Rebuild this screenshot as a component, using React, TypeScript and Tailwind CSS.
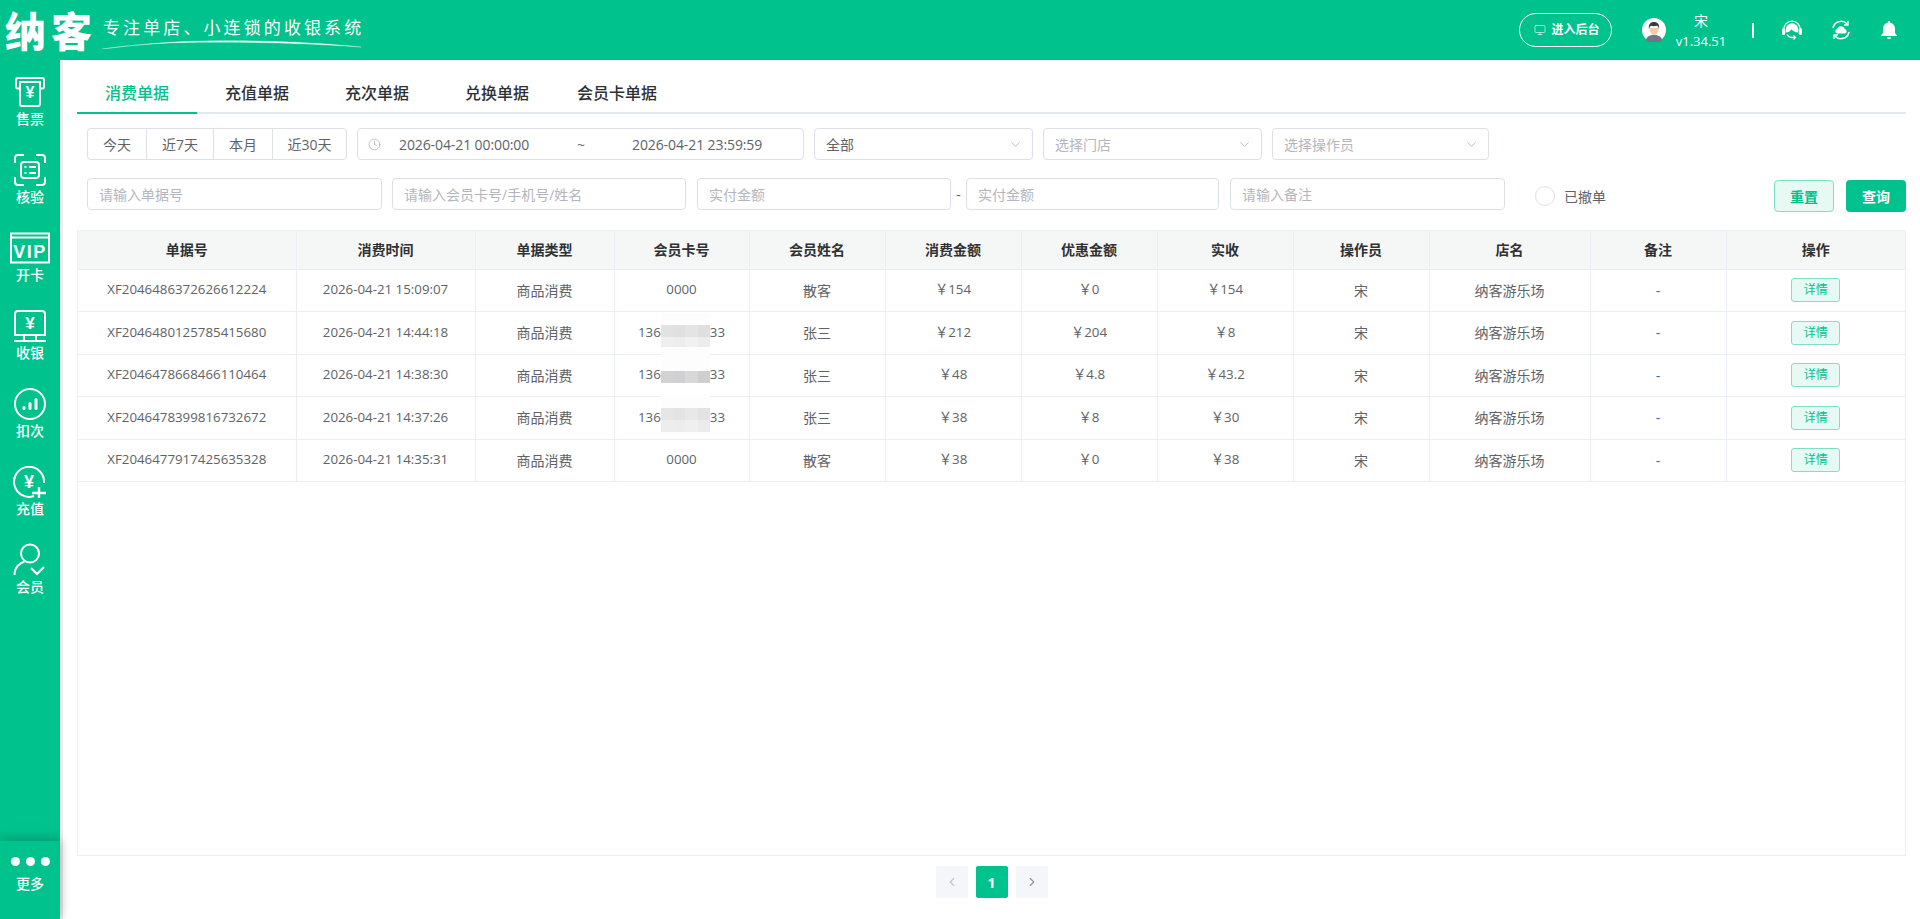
import React from "react";
import { ChevronDown, ChevronLeft, ChevronRight, Clock, Monitor } from "lucide-react";

const FONT = "font-['Open_Sans','Noto_Sans_CJK_SC',sans-serif]";
const CJK = "font-['Noto_Sans_CJK_SC','Noto_Sans',sans-serif]";

type Row = {
    no: string;
    time: string;
    card: string;
    name: string;
    total: string;
    off: string;
    paid: string;
    blur?: 1 | 2 | 3;
    h: string;
};

const rows: Row[] = [
    { no: "XF2046486372626612224", time: "2026-04-21 15:09:07", card: "0000", name: "散客", total: "154", off: "0", paid: "154", h: "h-[42px]" },
    { no: "XF2046480125785415680", time: "2026-04-21 14:44:18", card: "", name: "张三", total: "212", off: "204", paid: "8", blur: 1, h: "h-[43px]" },
    { no: "XF2046478668466110464", time: "2026-04-21 14:38:30", card: "", name: "张三", total: "48", off: "4.8", paid: "43.2", blur: 2, h: "h-[42px]" },
    { no: "XF2046478399816732672", time: "2026-04-21 14:37:26", card: "", name: "张三", total: "38", off: "8", paid: "30", blur: 3, h: "h-[43px]" },
    { no: "XF2046477917425635328", time: "2026-04-21 14:35:31", card: "0000", name: "散客", total: "38", off: "0", paid: "38", h: "h-[42px]" },
];

const columns = ["单据号", "消费时间", "单据类型", "会员卡号", "会员姓名", "消费金额", "优惠金额", "实收", "操作员", "店名", "备注", "操作"];
const colWidths = ["w-[218px]", "w-[179px]", "w-[139px]", "w-[135px]", "w-[136px]", "w-[136px]", "w-[136px]", "w-[136px]", "w-[136px]", "w-[161px]", "w-[136px]", "w-auto"];

const Ticket = () => (
    <svg width="32" height="32" viewBox="0 0 32 32" fill="none" stroke="white" strokeWidth="2">
        <path d="M6 12.5H3.5A1.5 1.5 0 0 1 2 11V4a2 2 0 0 1 2-2h24a2 2 0 0 1 2 2v7a1.5 1.5 0 0 1-1.5 1.5H26" />
        <path d="M6 6h20v22a2 2 0 0 1-2 2H8a2 2 0 0 1-2-2z" />
        <text x="16" y="22" textAnchor="middle" fontSize="16" fontWeight="700" fill="white" stroke="none" fontFamily="Liberation Sans">¥</text>
    </svg>
);

const Scan = () => (
    <svg width="32" height="32" viewBox="0 0 32 32" fill="none" stroke="white" strokeWidth="2">
        <path d="M1 9V4a3 3 0 0 1 3-3h6M22 1h6a3 3 0 0 1 3 3v5M31 23v5a3 3 0 0 1-3 3h-6M10 31H4a3 3 0 0 1-3-3v-5" />
        <rect x="7" y="8" width="18" height="16" rx="3" />
        <path d="M10.5 13h2M15 13h7M10.5 19h2M15 19h7" />
    </svg>
);

const Vip = () => (
    <svg width="42" height="32" viewBox="0 0 42 32" fill="none" stroke="white" strokeWidth="2">
        <rect x="2" y="1.5" width="38" height="29" />
        <path d="M2 5.5h38" />
        <text x="21" y="26" textAnchor="middle" fontSize="18" fontWeight="700" letterSpacing="1.5" fill="white" stroke="none" fontFamily="Liberation Sans">VIP</text>
    </svg>
);

const Cashier = () => (
    <svg width="34" height="32" viewBox="0 0 34 32" fill="none" stroke="white" strokeWidth="2">
        <path d="M2 25V4a3 3 0 0 1 3-3h24a3 3 0 0 1 3 3v21" />
        <path d="M1 31h32M1 25h32M11 25v6M23 25v6" />
        <text x="17" y="19" textAnchor="middle" fontSize="17" fontWeight="700" fill="white" stroke="none" fontFamily="Liberation Sans">¥</text>
    </svg>
);

const Deduct = () => (
    <svg width="32" height="32" viewBox="0 0 32 32" fill="none" stroke="white" strokeWidth="2">
        <circle cx="16" cy="16" r="15" />
        <rect x="8.5" y="18" width="3" height="4" rx="1.5" fill="white" stroke="none" />
        <rect x="14.5" y="14" width="3" height="8" rx="1.5" fill="white" stroke="none" />
        <rect x="20.5" y="10" width="3" height="12" rx="1.5" fill="white" stroke="none" />
    </svg>
);

const Recharge = () => (
    <svg width="34" height="32" viewBox="0 0 34 32" fill="none" stroke="white" strokeWidth="2">
        <path d="M21 30a15 15 0 1 1 10-13" />
        <path d="M19 27h14M26 21v11" strokeWidth="2.4" />
        <text x="16" y="22" textAnchor="middle" fontSize="18" fontWeight="700" fill="white" stroke="none" fontFamily="Liberation Sans">¥</text>
    </svg>
);

const Member = () => (
    <svg width="34" height="34" viewBox="0 0 34 34" fill="none" stroke="white" strokeWidth="2">
        <circle cx="17" cy="10.5" r="9" />
        <path d="M1.5 32c0-7 4.5-12 10-13.5" />
        <path d="M18 25l6 6 7-7" strokeWidth="2.2" />
    </svg>
);

const navItems = [
    { label: "售票", icon: <Ticket /> },
    { label: "核验", icon: <Scan /> },
    { label: "开卡", icon: <Vip /> },
    { label: "收银", icon: <Cashier /> },
    { label: "扣次", icon: <Deduct /> },
    { label: "充值", icon: <Recharge /> },
    { label: "会员", icon: <Member /> },
];

const Avatar = () => (
    <svg width="24" height="24" viewBox="0 0 24 24">
        <circle cx="12" cy="12" r="12" fill="white" />
        <path d="M4 22c.6-3.6 3.5-5 8-5s7.400 1.400 8 5a12 12 0 0 1-16 0z" fill="#6f7783" />
        <path d="M7.500 10c0 4 2 7 4.500 7s4.500-3 4.500-7z" fill="#f5c9a8" />
        <path d="M7 11c-.8-4.500 1.500-7 5-7s5.800 2.500 5 7c-.5-2-1.200-3-2-3.300-2 .6-4.500.6-6 0-.8.500-1.500 1.500-2 3.300z" fill="#3a3a3d" />
    </svg>
);

const Headset = () => (
    <svg width="20" height="20" viewBox="0 0 20 20" fill="none">
        <path d="M1.700 9.500a8.300 8.300 0 0 1 16.600 0" stroke="white" strokeWidth="1.300" />
        <rect x="0" y="8" width="3.200" height="7" rx="1.500" fill="white" />
        <rect x="16.800" y="8" width="3.200" height="7" rx="1.500" fill="white" />
        <path d="M3.800 9.500a6.200 6.200 0 0 1 12.400 0v3c-3.200-.2-5.200-1.200-6.700-3.200-1 2-3 3.200-5.700 3.200z" fill="white" />
        <path d="M5 14.500c1 2 2.700 3 5 3h3.500" stroke="white" strokeWidth="1.300" />
        <path d="M11.500 15.500l2.200 2-2.200 2" stroke="white" strokeWidth="1.100" />
    </svg>
);

const CloudSync = () => (
    <svg width="20" height="20" viewBox="0 0 20 20" fill="none" stroke="white" strokeWidth="1.600">
        <path d="M2 8a8.300 8.300 0 0 1 14-4.300" />
        <path d="M18 12a8.300 8.300 0 0 1-14 4.300" />
        <path d="M17 1v4h-4M3 19v-4h4" strokeWidth="1.300" />
        <path d="M6 13.500a2.300 2.300 0 0 1 .2-4.500 3.900 3.900 0 0 1 7.500 0 2.300 2.300 0 0 1 .2 4.500z" fill="white" stroke="none" />
    </svg>
);

const Bell = () => (
    <svg width="18" height="20" viewBox="0 0 18 20" fill="white">
        <path d="M9 1a1.300 1.300 0 0 1 1.300 1.300v.5C13.500 3.500 15 6 15 9v4l2 2.500v.5H1v-.5L3 13V9c0-3 1.500-5.500 4.700-6.200v-.5A1.300 1.300 0 0 1 9 1z" />
        <path d="M7 17.300h4a2 2 0 0 1-4 0z" />
    </svg>
);

const mosaics: Record<number, { top: string; cells: string[][] }> = {
    1: {
        top: "-top-[10px]",
        cells: [
            ["bg-[#fdfdfd]", "bg-[#fdfdfd]", "bg-[#fdfdfd]", "bg-[#fdfdfd]"],
            ["bg-[#e2e2e2]", "bg-[#e0e0e0]", "bg-[#e4e4e4]", "bg-[#dfdfdf]"],
            ["bg-[#efefef]", "bg-[#ededed]", "bg-[#f1f1f1]", "bg-[#ececec]"],
        ],
    },
    2: {
        top: "-top-[18px]",
        cells: [
            ["bg-[#fdfdfd]", "bg-[#fdfdfd]", "bg-[#fdfdfd]", "bg-[#fdfdfd]"],
            ["bg-[#fdfdfd]", "bg-[#fdfdfd]", "bg-[#fdfdfd]", "bg-[#fdfdfd]"],
            ["bg-[#d2d2d2]", "bg-[#d0d0d2]", "bg-[#d8d8d8]", "bg-[#cfcfcf]"],
        ],
    },
    3: {
        top: "-top-[12px]",
        cells: [
            ["bg-[#fdfdfd]", "bg-[#fdfdfd]", "bg-[#fdfdfd]", "bg-[#fdfdfd]"],
            ["bg-[#e6e6e6]", "bg-[#e4e4e4]", "bg-[#e8e8e8]", "bg-[#e3e3e3]"],
            ["bg-[#ededed]", "bg-[#ececec]", "bg-[#efefef]", "bg-[#ebebeb]"],
        ],
    },
};

const Blurred = ({ kind }: { kind: number }) => {
    const m = mosaics[kind];
    return (
        <span className="flex items-center justify-center">
            <span>136</span>
            <span className="relative block w-[49px] h-[20px]">
                <span className={`absolute left-0 w-[49px] grid grid-cols-4 ${m.top}`}>
                    {m.cells.flat().map((c, i) => (
                        <span key={i} className={`block h-[12px] ${c}`} />
                    ))}
                </span>
            </span>
            <span>33</span>
        </span>
    );
};

const Field = ({ text, className, dark }: { text: string; className: string; dark?: boolean }) => (
    <div
        className={`h-[32px] border border-[#dcdfe6] rounded-[4px] pl-[11px] flex items-center text-[14px] bg-white ${dark ? "text-[#606266]" : "text-[#b4b6bd]"} ${className}`}
    >
        {text}
    </div>
);

const SelectBox = ({ text, className, dark }: { text: string; className: string; dark?: boolean }) => (
    <div
        className={`h-[32px] border border-[#dcdfe6] rounded-[4px] pl-[11px] pr-[9px] flex items-center justify-between text-[14px] bg-white ${dark ? "text-[#606266]" : "text-[#b4b6bd]"} ${className}`}
    >
        <span>{text}</span>
        <ChevronDown size={15} strokeWidth={1} className="text-[#909399]" />
    </div>
);

export default function App() {
    return (
        <div className={`h-screen w-full flex flex-col overflow-hidden bg-white ${FONT}`}>
            {/* header */}
            <header className="h-[60px] shrink-0 bg-[#00c28c] flex items-center text-white">
                <div className={`w-[96px] ml-[5px] -mt-[2px] text-[41px] leading-[58px] font-black tracking-[5px] whitespace-nowrap ${CJK}`}>纳客</div>
                <div className="relative ml-[1px] w-[262px] h-[60px]">
                    <div className="pt-[15px] pl-[1px] text-[17px] leading-[24px] tracking-[3.1px] whitespace-nowrap font-['Noto_Sans_CJK_SC',serif]">
                        专注单店、小连锁的收银系统
                    </div>
                    <svg className="absolute left-0 top-[39px]" width="262" height="10" viewBox="0 0 262 10" fill="none">
                        <path d="M0 10C40 5 70 2.500 100 2c60-1 110 1 159 6C200 4 150 3 100 3.200 60 3.400 30 6 0 10z" fill="white" stroke="white" strokeWidth=".3" />
                    </svg>
                </div>
                <div className="ml-auto flex items-center">
                    <div className="w-[93px] h-[34px] pl-[3px] rounded-full border border-white flex items-center justify-center gap-[5px] text-[12px] font-bold">
                        <Monitor size={12} strokeWidth={1.2} />
                        <span>进入后台</span>
                    </div>
                    <div className="ml-[30px]">
                        <Avatar />
                    </div>
                    <div className="ml-[10px] w-[50px] flex flex-col items-center text-[14px] leading-[20px] mt-[1px]">
                        <span>宋</span>
                        <span className="text-[13px]">v1.34.51</span>
                    </div>
                    <div className="ml-[26px] w-[2px] h-[15px] bg-white" />
                    <div className="ml-[28px] flex items-center gap-[29px] mr-[22px]">
                        <Headset />
                        <CloudSync />
                        <Bell />
                    </div>
                </div>
            </header>

            <div className="flex-1 flex min-h-0">
                {/* sidebar */}
                <aside className="w-[63px] shrink-0 bg-[#00c28c] border-r-[3px] border-[#ececec] flex flex-col justify-between text-white text-[14px]">
                    <nav className="pt-[4px]">
                        {navItems.map((item) => (
                            <div key={item.label} className="h-[78px] pt-[12px] flex flex-col items-center">
                                <div className="h-[32px] flex items-center justify-center">{item.icon}</div>
                                <span className="mt-[1px] leading-[20px] font-medium">{item.label}</span>
                            </div>
                        ))}
                    </nav>
                    <div className="relative h-[78px] w-[60px] shrink-0 bg-[#00c28c] shadow-[0_-4px_10px_rgba(0,0,0,0.12),3px_0_8px_rgba(0,0,0,0.12)] flex flex-col items-center pt-[16px]">
                        <div className="flex gap-[6px]">
                            <span className="w-[9px] h-[9px] rounded-full bg-white" />
                            <span className="w-[9px] h-[9px] rounded-full bg-white" />
                            <span className="w-[9px] h-[9px] rounded-full bg-white" />
                        </div>
                        <span className="mt-[8px] leading-[20px] font-medium">更多</span>
                    </div>
                </aside>

                <main className="flex-1 min-w-0 pl-[14px] pr-[14px] flex flex-col">
                    {/* tabs */}
                    <div className="h-[54px] shrink-0 flex items-end border-b-2 border-[#e4e7ed]">
                        {["消费单据", "充值单据", "充次单据", "兑换单据", "会员卡单据"].map((tab, i) => (
                            <div
                                key={tab}
                                className={`w-[120px] h-[40px] -mb-[2px] flex items-center justify-center text-[16px] font-medium border-b-2 ${i === 0 ? "text-[#00c28c] border-[#00c28c]" : "text-[#303133] border-transparent"}`}
                            >
                                {tab}
                            </div>
                        ))}
                    </div>

                    {/* filters */}
                    <div className="mt-[14px] pl-[10px] flex gap-[10px]">
                        <div className="flex h-[32px] border border-[#dcdfe6] rounded-[4px] text-[14px] text-[#606266]">
                            <div className="w-[59px] flex items-center justify-center border-r border-[#dcdfe6]">今天</div>
                            <div className="w-[67px] flex items-center justify-center border-r border-[#dcdfe6]">近7天</div>
                            <div className="w-[59px] flex items-center justify-center border-r border-[#dcdfe6]">本月</div>
                            <div className="w-[73px] flex items-center justify-center">近30天</div>
                        </div>
                        <div className="w-[447px] h-[32px] border border-[#dcdfe6] rounded-[4px] flex items-center text-[#606266] text-[14px]">
                            <Clock size={13} strokeWidth={1} className="ml-[10px] text-[#909399]" />
                            <span className="ml-[18px] w-[131px] tracking-[-0.1px] whitespace-nowrap">2026-04-21 00:00:00</span>
                            <span className="ml-[47px] w-[55px]">~</span>
                            <span className="w-[131px] tracking-[-0.1px] whitespace-nowrap">2026-04-21 23:59:59</span>
                        </div>
                        <SelectBox text="全部" dark className="w-[219px]" />
                        <SelectBox text="选择门店" className="w-[219px]" />
                        <SelectBox text="选择操作员" className="w-[217px]" />
                    </div>

                    <div className="mt-[18px] pl-[10px] flex items-start h-[34px]">
                        <Field text="请输入单据号" className="w-[295px]" />
                        <Field text="请输入会员卡号/手机号/姓名" className="w-[294px] ml-[10px]" />
                        <Field text="实付金额" className="w-[254px] ml-[11px]" />
                        <span className="w-[15px] h-[32px] flex items-center justify-center text-[14px] text-[#606266]">-</span>
                        <Field text="实付金额" className="w-[253px]" />
                        <Field text="请输入备注" className="w-[275px] ml-[11px]" />
                        <div className="ml-[30px] h-[32px] flex items-center text-[14px] text-[#606266] mt-[2px]">
                            <span className="w-[20px] h-[20px] rounded-full border border-[#dcdfe6]" />
                            <span className="ml-[9px]">已撤单</span>
                        </div>
                        <div className="ml-auto flex gap-[12px] mt-[2px]">
                            <button className="w-[60px] h-[32px] rounded-[4px] border border-[#80e0c5] bg-[#e6f9f3] text-[#00c28c] text-[14px] font-bold">重置</button>
                            <button className="w-[60px] h-[32px] rounded-[4px] bg-[#00c28c] text-white text-[14px] font-bold">查询</button>
                        </div>
                    </div>

                    {/* table */}
                    <div className="mt-[18px] flex-1 min-h-0 border border-[#ebeef5] overflow-hidden">
                        <table className="w-full table-fixed border-collapse text-[14px] text-[#606266]">
                            <colgroup>
                                {colWidths.map((w, i) => (
                                    <col key={i} className={w} />
                                ))}
                            </colgroup>
                            <thead>
                                <tr className="h-[38px] bg-[#f5f7f7]">
                                    {columns.map((c) => (
                                        <th key={c} className="border-r border-b border-[#ebeef5] last:border-r-0 font-bold text-[#303133] text-center">
                                            {c}
                                        </th>
                                    ))}
                                </tr>
                            </thead>
                            <tbody>
                                {rows.map((r) => (
                                    <tr key={r.no} className={r.h}>
                                        <td className="border-r border-b border-[#ebeef5] text-center text-[13.3px]">{r.no}</td>
                                        <td className="border-r border-b border-[#ebeef5] text-center text-[13.3px]">{r.time}</td>
                                        <td className="border-r border-b border-[#ebeef5] text-center">商品消费</td>
                                        <td className="border-r border-b border-[#ebeef5] text-center text-[13.3px]">
                                            {r.blur ? <Blurred kind={r.blur} /> : r.card}
                                        </td>
                                        <td className="border-r border-b border-[#ebeef5] text-center">{r.name}</td>
                                        <td className="border-r border-b border-[#ebeef5] text-center text-[13.3px]">￥{r.total}</td>
                                        <td className="border-r border-b border-[#ebeef5] text-center text-[13.3px]">￥{r.off}</td>
                                        <td className="border-r border-b border-[#ebeef5] text-center text-[13.3px]">￥{r.paid}</td>
                                        <td className="border-r border-b border-[#ebeef5] text-center">宋</td>
                                        <td className="border-r border-b border-[#ebeef5] text-center">纳客游乐场</td>
                                        <td className="border-r border-b border-[#ebeef5] text-center text-[#2a6fc9]">-</td>
                                        <td className="border-b border-[#ebeef5] text-center">
                                            <span className="inline-flex items-center justify-center w-[49px] h-[24px] rounded-[3px] border border-[#80e0c5] bg-[#e6f9f3] text-[#00c28c] text-[12px]">
                                                详情
                                            </span>
                                        </td>
                                    </tr>
                                ))}
                            </tbody>
                        </table>
                    </div>

                    {/* pagination */}
                    <div className="mt-[10px] mb-[21px] shrink-0 flex justify-center gap-[8px]">
                        <div className="w-[32px] h-[32px] rounded-[2px] bg-[#f5f6fa] flex items-center justify-center text-[#c0c4cc]">
                            <ChevronLeft size={14} />
                        </div>
                        <div className="w-[32px] h-[32px] rounded-[2px] bg-[#00c28c] flex items-center justify-center text-white text-[14px] font-bold">1</div>
                        <div className="w-[32px] h-[32px] rounded-[2px] bg-[#f5f6fa] flex items-center justify-center text-[#909399]">
                            <ChevronRight size={14} />
                        </div>
                    </div>
                </main>
            </div>
        </div>
    );
}
